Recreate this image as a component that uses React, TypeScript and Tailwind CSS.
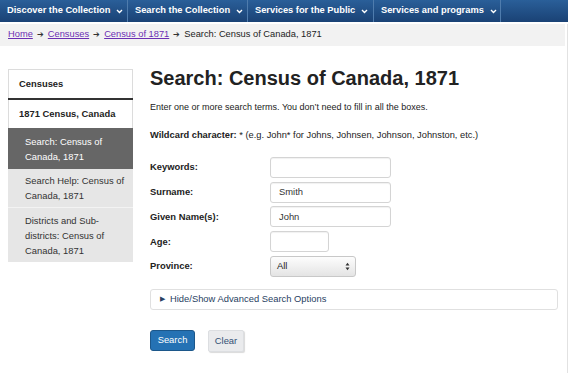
import React from "react";

const navItems = [
  { label: "Discover the Collection", w: "w-[128px]" },
  { label: "Search the Collection", w: "w-[120px]" },
  { label: "Services for the Public", w: "w-[126px]" },
  { label: "Services and programs", w: "w-[127px]" },
];

function Chevron() {
  return (
    <svg width="7" height="5" viewBox="0 0 7 5" className="ml-[6px]">
      <path d="M1 1 L3.5 3.5 L6 1" stroke="white" strokeWidth="1.4" fill="none" />
    </svg>
  );
}

function Arrow() {
  return <span className="mx-[4px] text-[8px] text-[#333]">➔</span>;
}

function Field({ label, value, w = "w-[121px]" }: { label: string; value?: string; w?: string }) {
  return (
    <div className="flex items-center h-[24.75px]">
      <div className="w-[120px] font-bold text-[9.4px] text-[#222]">{label}</div>
      <div
        className={`${w} h-[21px] border border-[#d4d4d4] rounded-[3px] bg-white shadow-[inset_0_1px_1px_rgba(0,0,0,0.06)] flex items-center pl-[8px] text-[9.4px] text-[#333]`}
      >
        {value}
      </div>
    </div>
  );
}

export default function App() {
  return (
    <div className="w-[570px] h-[373px] bg-white overflow-hidden font-['Liberation_Sans',Arial,sans-serif] text-[#222] relative">
      <div className="h-[22px] flex bg-gradient-to-b from-[#2a5f99] to-[#1a4275] w-[568px]">
        {navItems.map((n) => (
          <div
            key={n.label}
            className={`${n.w} h-full flex items-center pl-[7px] border-r border-[#4f7cad] text-white font-bold text-[9.3px] whitespace-nowrap`}
          >
            {n.label}
            <Chevron />
          </div>
        ))}
      </div>
      <div className="h-[2px]" />
      <div className="h-[22px] w-[565px] bg-[#f2f2f2] flex items-center pl-[8px] text-[9.3px]">
        <a className="text-[#6b2fb3] underline">Home</a>
        <Arrow />
        <a className="text-[#6b2fb3] underline">Censuses</a>
        <Arrow />
        <a className="text-[#6b2fb3] underline">Census of 1871</a>
        <Arrow />
        <span className="text-[#222]">Search: Census of Canada, 1871</span>
      </div>
      <div className="flex pt-[23px] pl-[8px]">
        <div className="w-[125px] shrink-0 text-[9.4px]">
          <div className="h-[29px] border border-[#dcdcdc] border-b-0 bg-white flex items-center pl-[10px] font-bold">
            Censuses
          </div>
          <div className="h-[2px] bg-[#333]" />
          <div className="h-[28px] border-x border-[#dcdcdc] bg-white flex items-center pl-[10px] font-bold">
            1871 Census, Canada
          </div>
          <div className="h-[41px] bg-[#666666] text-white pl-[17px] pr-[6px] flex items-center leading-[15px]">
            Search: Census of Canada, 1871
          </div>
          <div className="h-[39px] bg-[#e6e6e6] pl-[17px] pr-[6px] flex items-center leading-[15px] text-[#333] border-b border-[#f3f3f3]">
            Search Help: Census of Canada, 1871
          </div>
          <div className="h-[54px] bg-[#e6e6e6] pl-[17px] pr-[8px] flex items-center leading-[15px] text-[#333]">
            Districts and Sub-districts: Census of Canada, 1871
          </div>
        </div>
        <div className="ml-[17px] flex-1">
          <h1 className="text-[20px] font-bold leading-[23px] mt-[-2px] text-[#222]">
            Search: Census of Canada, 1871
          </h1>
          <p className="text-[9px] mt-[11px] leading-[12px]">
            Enter one or more search terms. You don’t need to fill in all the boxes.
          </p>
          <p className="text-[9.3px] mt-[16px] leading-[12px]">
            <b>Wildcard character:</b> * (e.g. John* for Johns, Johnsen, Johnson, Johnston, etc.)
          </p>
          <div className="mt-[14px] flex flex-col">
            <Field label="Keywords:" />
            <Field label="Surname:" value="Smith" />
            <Field label="Given Name(s):" value="John" />
            <Field label="Age:" w="w-[59px]" />
            <div className="flex items-center h-[24.75px]">
              <div className="w-[120px] font-bold text-[9.4px] text-[#222]">Province:</div>
              <div className="w-[86px] h-[21px] border border-[#c8c8c8] rounded-[3px] bg-gradient-to-b from-[#fdfdfd] to-[#e4e4e4] flex items-center justify-between pl-[6px] pr-[5px] text-[9.4px] text-[#222]">
                <span>All</span>
                <svg width="5" height="9" viewBox="0 0 5 9">
                  <path d="M0.5 3.5 L2.5 0.8 L4.5 3.5 Z M0.5 5.5 L2.5 8.2 L4.5 5.5 Z" fill="#333" />
                </svg>
              </div>
            </div>
          </div>
          <div className="mt-[10px] w-[408px] h-[21px] border border-[#e0e0e0] rounded-[3px] flex items-center pl-[9px] text-[9.4px] text-[#284162]">
            <span className="text-[7px] mr-[5px]">▶</span>
            Hide/Show Advanced Search Options
          </div>
          <div className="mt-[20px] flex items-start">
            <div className="w-[45px] h-[21px] bg-[#2572b4] border border-[#1c578a] rounded-[3px] text-white text-[9.4px] flex items-center justify-center">
              Search
            </div>
            <div className="ml-[13px] w-[36px] h-[22px] bg-[#eaebed] border border-[#dcdee1] rounded-[2px] shadow-[1px_1px_1px_rgba(0,0,0,0.15)] text-[#335075] text-[9.4px] flex items-center justify-center">
              Clear
            </div>
          </div>
        </div>
      </div>
      <div className="absolute right-[2px] top-[24px] bottom-0 w-[1px] bg-[#e2e2e2]" />
    </div>
  );
}
